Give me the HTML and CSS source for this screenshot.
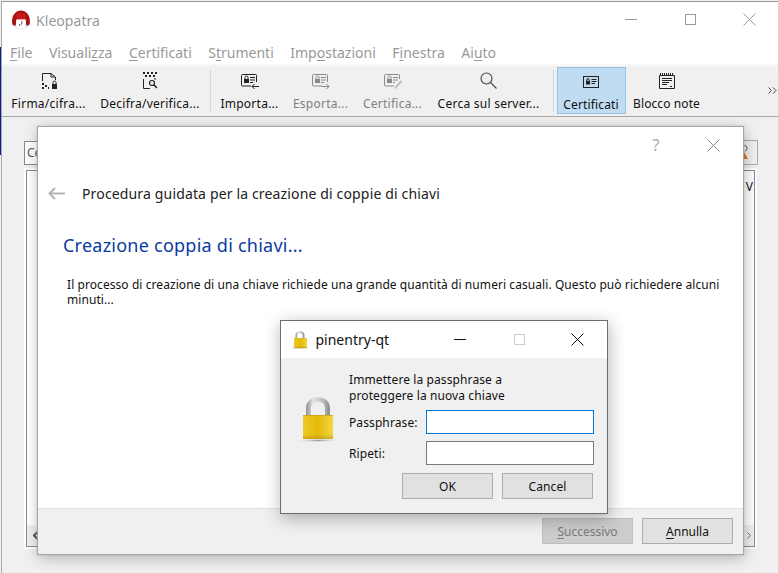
FILE: index.html
```html
<!DOCTYPE html>
<html lang="en">
	<head>
		<meta charset="utf-8" />
		<title>Kleopatra</title>
		<link rel="stylesheet" href="styles.css">
	</head>
	<body>
		<div class="desk-strip"></div>

		<div id="mainWin" class="win">
			<div class="titlebar">
				<svg class="logo" width="18" height="20" viewBox="0 0 18 20">
					<circle cx="9" cy="10.500" r="9" fill="#f4f4f4" stroke="#ddd" stroke-width="0.500"/>
					<path d="M0.300 14C-1 6 3.500 0.500 9 0.500C14.500 0.500 19 6 17.700 14C16.800 15.500 15.500 16 14.300 15.500L13.500 9.500L4.500 9.500L3.700 15.500C2.500 16 1.200 15.500 0.300 14Z" fill="#a81212"/>
					<path d="M4 4.500C6 2.500 12 2.500 14 4.500L13.500 9.500H4.500Z" fill="#c41a1a"/>
					<path d="M4.500 9.500H13.500L14 15C12.500 17.500 11 18.500 9 18.500C7 18.500 5.500 17.500 4 15Z" fill="#fff"/>
					<path d="M10 11L9.600 14.500M7.800 14L7.500 16" stroke="#333" stroke-width="0.800" fill="none"/>
				</svg>
				<span class="app-title">Kleopatra</span>
				<div class="caption-btns">
					<svg width="13" height="13" viewBox="0 0 13 13"><path d="M0 6.500H12" stroke="#999" fill="none"/></svg>
					<svg width="13" height="13" viewBox="0 0 13 13"><rect x="1.500" y="1.500" width="10" height="10" fill="none" stroke="#999"/></svg>
					<svg width="13" height="13" viewBox="0 0 13 13"><path d="M0.500 0.500L12.500 12.500M12.500 0.500L0.500 12.500" stroke="#999" fill="none"/></svg>
				</div>
			</div>
			<div class="menubar">
				<span><u>F</u>ile</span>
				<span>Visuali<u>z</u>za</span>
				<span><u>C</u>ertificati</span>
				<span>S<u>t</u>rumenti</span>
				<span>Imp<u>o</u>stazioni</span>
				<span>F<u>i</u>nestra</span>
				<span>Ai<u>u</u>to</span>
			</div>
			<div class="toolbar">
				<div class="tool t-firma">
					<svg width="16" height="17" viewBox="0 0 16 17"><path d="M1.500 9V1.500H10L14.500 5V8" fill="none" stroke="#222"/><path d="M10 1.500V5H14" fill="none" stroke="#222"/><path d="M1 11h2v2H1zM4 13h2v2H4zM1 15h2v2H1zM7 15h1v2H7z" fill="#222"/><rect x="11" y="12" width="5" height="5" fill="#222"/><path d="M12 12V10.500a1.500 1.500 0 0 1 3 0V12" fill="none" stroke="#222"/></svg>
					<span>Firma/cifra...</span>
				</div>
				<div class="tool t-decifra">
					<svg width="16" height="17" viewBox="0 0 16 17"><path d="M1 0h2v2H1zM5 0h2v2H5zM9 0h2v2H9zM13 0h2v2H13zM3 3h2v2H3zM7 3h2v2H7zM11 3h2v2H11z" fill="#222"/><path d="M1.500 7V16.500H8M13 6V8" fill="none" stroke="#222"/><circle cx="10" cy="11" r="2.500" fill="none" stroke="#222" stroke-width="1.200"/><path d="M12 13L15 16" stroke="#222" stroke-width="1.500"/></svg>
					<span>Decifra/verifica...</span>
				</div>
				<div class="sep"></div>
				<div class="tool t-importa">
					<svg width="18" height="15" viewBox="0 0 18 15"><path d="M15.500 8V1.500a1 1 0 0 0-1-1H1.500a1 1 0 0 0-1 1V11a1 1 0 0 0 1 1H10" fill="none" stroke="#222"/><rect x="3" y="5" width="5" height="4" fill="#222"/><path d="M4 5V3.500a1.500 1.500 0 0 1 3 0V5" fill="none" stroke="#222"/><path d="M9 3.500H14M9 6H14M9 8.500H12M18 12.500H11M13.500 10L11 12.500L13.500 15" fill="none" stroke="#222"/></svg>
					<span>Importa...</span>
				</div>
				<div class="tool t-esporta off">
					<svg width="18" height="15" viewBox="0 0 18 15"><path d="M15.500 8V1.500a1 1 0 0 0-1-1H1.500a1 1 0 0 0-1 1V11a1 1 0 0 0 1 1H10" fill="none" stroke="#888"/><rect x="3" y="5" width="5" height="4" fill="#888"/><path d="M4 5V3.500a1.500 1.500 0 0 1 3 0V5" fill="none" stroke="#888"/><path d="M9 3.500H14M9 6H14M9 8.500H12M10 12.500H17M14.500 10L17 12.500L14.500 15" fill="none" stroke="#888"/></svg>
					<span>Esporta...</span>
				</div>
				<div class="tool t-certifica off">
					<svg width="18" height="15" viewBox="0 0 18 15"><path d="M15.500 5V1.500a1 1 0 0 0-1-1H1.500a1 1 0 0 0-1 1V11a1 1 0 0 0 1 1H10" fill="none" stroke="#888"/><rect x="3" y="5" width="5" height="4" fill="#888"/><path d="M4 5V3.500a1.500 1.500 0 0 1 3 0V5" fill="none" stroke="#888"/><path d="M9 3.500H14M9 6H14M9 8.500H11" fill="none" stroke="#888"/><path d="M17 6L11 13L10 15L12.500 14L18 8Z" fill="#bbb"/></svg>
					<span>Certifica...</span>
				</div>
				<div class="tool t-cerca">
					<svg width="17" height="17" viewBox="0 0 17 17"><circle cx="6.500" cy="6.500" r="5.500" fill="none" stroke="#444" stroke-width="1.100"/><path d="M10.500 10.500L16.500 16.500" stroke="#444" stroke-width="1.100"/></svg>
					<span>Cerca sul server...</span>
				</div>
				<div class="sep"></div>
				<div class="tool t-cert active">
					<svg width="16" height="12" viewBox="0 0 16 12"><rect x="0.500" y="0.500" width="15" height="11" fill="none" stroke="#222"/><rect x="3" y="5" width="4" height="3.500" fill="#222"/><path d="M3.800 5V3.800a1.200 1.200 0 0 1 2.400 0V5" fill="none" stroke="#222"/><path d="M8.500 3.500H13.500M8.500 5.500H13.500M8.500 7.500H12" stroke="#222" fill="none"/></svg>
					<span>Certificati</span>
				</div>
				<div class="tool t-note">
					<svg width="16" height="16" viewBox="0 0 16 16"><path d="M0.500 2.500H15.500V15.500H0.500Z" fill="none" stroke="#222"/><path d="M1 0h1v2H1zM3 0h1v2H3zM5 0h1v2H5zM7 0h1v2H7zM9 0h1v2H9zM11 0h1v2H11zM13 0h1v2H13zM1 2h14v1H1z" fill="#222"/><path d="M3 5.500H13M3 7.500H13M3 9.500H10M3 11.500H8M11 13.500H13" stroke="#222" fill="none"/></svg>
					<span>Blocco note</span>
				</div>
				<svg class="more" width="9" height="7" viewBox="0 0 9 7"><path d="M0.500 0.500L3.500 3.500L0.500 6.500M5 0.500L8 3.500L5 6.500" fill="none" stroke="#444"/></svg>
			</div>
			<div class="central">
				<div class="searchbox">Ce</div>
				<div class="searchbtn">
					<svg width="11" height="15" viewBox="0 0 11 15"><path d="M5 0.500A3 3 0 0 1 9 3.500Q9 5 7 6.500" fill="none" stroke="#555"/><path d="M2 14L6 7L10 14Z" fill="#e0700f"/></svg>
				</div>
				<div class="certtable">
					<span class="col-v">V</span>
					<div class="hscroll">
						<svg width="7" height="11" viewBox="0 0 7 11"><path d="M6 0.500L1 5.500L6 10.500" fill="none" stroke="#555" stroke-width="2"/></svg>
						<svg width="4" height="7" viewBox="0 0 4 7"><path d="M0.500 0.500L3.500 3.500L0.500 6.500" fill="none" stroke="#777"/></svg>
					</div>
				</div>
			</div>
		</div>

		<div id="wizard" class="win">
			<div class="wiz-top">
				<span class="help">?</span>
				<svg width="13" height="13" viewBox="0 0 13 13"><path d="M0.500 0.500L12.500 12.500M12.500 0.500L0.500 12.500" stroke="#888" fill="none"/></svg>
			</div>
			<div class="wiz-head">
				<svg width="17" height="13" viewBox="0 0 17 13"><path d="M7 1L1.500 6.500L7 12M2 6.500H17" fill="none" stroke="#b4b4b4" stroke-width="2"/></svg>
				<span>Procedura guidata per la creazione di coppie di chiavi</span>
			</div>
			<div class="wiz-body">
				<h2>Creazione coppia di chiavi...</h2>
				<p>Il processo di creazione di una chiave richiede una grande quantità di numeri casuali. Questo può richiedere alcuni minuti...</p>
			</div>
			<div class="wiz-foot">
				<div class="btn disabled"><u>S</u>uccessivo</div>
				<div class="btn"><u>A</u>nnulla</div>
			</div>
		</div>

		<div id="pinentry" class="win">
			<div class="pin-title">
				<svg width="16" height="19" viewBox="0 0 16 19">
					<ellipse cx="8" cy="18" rx="8" ry="1" fill="#d8d8d8"/>
					<path d="M3.500 9V5.500C3.500 -0.500 12.500 -0.500 12.500 5.500V9H10.500V5.500C10.500 2 5.500 2 5.500 5.500V9Z" fill="url(#steel)"/>
					<rect x="2" y="8" width="13" height="10" fill="url(#gold)"/>
					<rect x="2" y="8" width="13" height="10" fill="url(#goldV)"/>
				</svg>
				<span class="pin-name">pinentry-qt</span>
				<div class="pin-caption">
					<svg width="13" height="13" viewBox="0 0 13 13"><path d="M0 6.500H12" stroke="#111" fill="none"/></svg>
					<svg width="13" height="13" viewBox="0 0 13 13"><rect x="1.500" y="1.500" width="10" height="10" fill="none" stroke="#ccc"/></svg>
					<svg width="13" height="13" viewBox="0 0 13 13"><path d="M0.500 0.500L12.500 12.500M12.500 0.500L0.500 12.500" stroke="#111" fill="none"/></svg>
				</div>
			</div>
			<div class="pin-body">
				<svg class="pin-lock" width="46" height="48" viewBox="0 0 46 48">
					<defs>
						<linearGradient id="gold" x1="0" x2="1" y1="0" y2="0">
							<stop offset="0" stop-color="#eccb24"/>
							<stop offset="0.5" stop-color="#e3ba0c"/>
							<stop offset="1" stop-color="#f2d840"/>
						</linearGradient>
						<linearGradient id="goldV" x1="0" x2="0" y1="0" y2="1">
							<stop offset="0" stop-color="#a88018" stop-opacity="0.7"/>
							<stop offset="0.08" stop-color="#e6c21a" stop-opacity="0"/>
							<stop offset="0.8" stop-color="#c09010" stop-opacity="0"/>
							<stop offset="1" stop-color="#a87c05" stop-opacity="0.5"/>
						</linearGradient>
						<linearGradient id="steel" x1="0" x2="1" y1="0" y2="0">
							<stop offset="0" stop-color="#8e8e8e"/>
							<stop offset="0.3" stop-color="#e4e4e4"/>
							<stop offset="0.7" stop-color="#bdbdbd"/>
							<stop offset="1" stop-color="#8a8a8a"/>
						</linearGradient>
						<radialGradient id="floor">
							<stop offset="0" stop-color="#999"/>
							<stop offset="1" stop-color="#eee" stop-opacity="0"/>
						</radialGradient>
					</defs>
					<ellipse cx="23" cy="45.500" rx="23" ry="2" fill="url(#floor)"/>
					<path d="M11 21V13C11 -1.500 35 -1.500 35 13V21H30V13C30 4.500 16 4.500 16 13V21Z" fill="url(#steel)"/>
					<rect x="8" y="20" width="30" height="24" fill="url(#gold)"/>
					<rect x="8" y="20" width="30" height="24" fill="url(#goldV)"/>
				</svg>
				<div class="pin-form">
					<div class="pin-desc">Immettere la passphrase a<br>proteggere la nuova chiave</div>
					<div class="pin-row">
						<label>Passphrase:</label>
						<div class="field focus"></div>
					</div>
					<div class="pin-row">
						<label>Ripeti:</label>
						<div class="field"></div>
					</div>
					<div class="pin-btns">
						<div class="btn">OK</div>
						<div class="btn">Cancel</div>
					</div>
				</div>
			</div>
		</div>
	</body>
</html>
```

FILE: styles.css
```css
body, html {
	margin:0;
	padding:0;
	width:778px;
	height:573px;
	overflow:hidden;
	background:#f0f0f0;
	font-family:"Noto Sans", "Open Sans", sans-serif;
	font-size:12px;
	color:#111;
}
u {
	text-underline-offset:2px;
}
.desk-strip {
	position:absolute;
	left:0;
	top:47px;
	width:1px;
	height:108px;
	background:#0a1a9a;
}
.win {
	position:absolute;
	box-sizing:border-box;
}

/* main window */
#mainWin {
	left:1px;
	top:1px;
	width:777px;
	height:572px;
	display:flex;
	flex-direction:column;
	border-left:1px solid #aaa;
	border-top:1px solid #999;
	background:#f0f0f0;
}
.titlebar {
	height:36px;
	background:#fff;
	display:flex;
	align-items:center;
	padding-left:10px;
	flex:none;
}
.logo {
	margin-right:6px;
}
.app-title {
	font-size:14px;
	letter-spacing:0.05px;
	color:#999;
}
.caption-btns {
	margin-left:auto;
	display:flex;
	gap:46px;
	margin-right:22px;
	margin-top:-2px;
}
.menubar {
	flex:none;
	background:#fff;
	display:flex;
	gap:16.500px;
	align-items:center;
	padding:2px 0 0 8px;
	font-size:14px;
	color:#999;
	border-bottom:2px solid #f7f7f7;
	box-sizing:border-box;
	height:28px;
}
.toolbar {
	height:51px;
	flex:none;
	display:flex;
	box-sizing:border-box;
	border-bottom:1px solid #a8a8a8;
	position:relative;
	padding-top:1px;
}
.tool {
	display:flex;
	flex-direction:column;
	align-items:center;
	box-sizing:border-box;
	height:47px;
	white-space:nowrap;
	justify-content:flex-end;
	padding-bottom:2px;
	letter-spacing:0.250px;
}
.tool svg {
	margin-bottom:6px;
}
.tool.off {
	color:#808080;
}
.t-firma { width:87px; margin-left:3px; }
.t-decifra { width:110px; margin-left:3px; }
.t-importa { width:66px; margin-left:5.500px; }
.t-esporta { width:70px; margin-left:3px; }
.t-certifica { width:74px; }
.t-cerca { width:118px; }
.t-cert { width:69px; margin-left:3px; }
.t-note { width:80px; margin-left:1px; letter-spacing:0.100px; }
.sep {
	width:1px;
	height:42px;
	background:#d6d6d6;
	margin:3px 0 0 5px;
}
.tool.active {
	background:#bfdcf3;
	border:1px solid #94c3e8;
	padding-bottom:0;
	letter-spacing:0.150px;
}
.tool.active svg {
	margin-bottom:8px;
}
.more {
	position:absolute;
	right:1px;
	top:21px;
}
.central {
	flex:1;
	position:relative;
}
.searchbox {
	position:absolute;
	left:22px;
	top:24px;
	width:722px;
	height:24px;
	box-sizing:border-box;
	border:1px solid #8a8a8a;
	background:#fff;
	padding:2px;
	color:#555;
}
.searchbtn {
	position:absolute;
	left:731px;
	top:23px;
	width:25px;
	height:25px;
	box-sizing:border-box;
	border:1px solid #aaa;
	background:#f0f0f0;
	padding:4px 0 0 4px;
}
.certtable {
	position:absolute;
	left:24px;
	top:53px;
	width:729px;
	height:377px;
	box-sizing:border-box;
	border:1px solid #8a8a9a;
	outline:2px solid #fff;
	background:#fff;
}
.col-v {
	position:absolute;
	right:1px;
	top:7px;
	color:#111;
}
.hscroll {
	position:absolute;
	left:0;
	right:0;
	bottom:0;
	height:21px;
	background:#f0f0f0;
	display:flex;
	align-items:center;
	justify-content:space-between;
	padding:0 3px 0 6px;
}

/* wizard dialog */
#wizard {
	left:38px;
	top:127px;
	width:705px;
	height:427px;
	display:flex;
	flex-direction:column;
	background:#fff;
	box-shadow:0 0 1px 1px #a6a6a6, 1px 3px 14px rgba(0,0,0,0.3);
}
.wiz-top {
	height:36px;
	flex:none;
	display:flex;
	justify-content:flex-end;
	align-items:center;
	padding-right:23px;
	gap:47.500px;
}
.help {
	font-size:16px;
	color:#aaa;
}
.wiz-head {
	display:flex;
	align-items:center;
	gap:17px;
	height:24px;
	padding-left:10px;
	font-size:14px;
	letter-spacing:0.150px;
	color:#222;
	flex:none;
	margin-top:18px;
}
.wiz-body {
	flex:1;
	padding:0 25px;
}
.wiz-body h2 {
	margin:28px 0 20px;
	font-weight:normal;
	font-size:18px;
	letter-spacing:0.240px;
	line-height:24px;
	color:#0a3ca0;
}
.wiz-body p {
	margin:0 0 0 4px;
	width:660px;
	line-height:15px;
	letter-spacing:0.070px;
	color:#111;
}
.wiz-foot {
	height:46px;
	flex:none;
	box-sizing:border-box;
	border-top:1px solid #dfdfdf;
	background:#f0f0f0;
	display:flex;
	justify-content:flex-end;
	gap:9px;
	padding:9px 10px 0 0;
}
.btn {
	width:91px;
	height:26px;
	box-sizing:border-box;
	border:1px solid #adadad;
	background:#e1e1e1;
	display:flex;
	align-items:center;
	justify-content:center;
	white-space:pre;
}
.btn.disabled {
	background:#cccccc;
	border-color:#bfbfbf;
	color:#7a7a7a;
}

/* passphrase window */
#pinentry {
	left:280px;
	top:320px;
	width:328px;
	height:194px;
	background:#f0f0f0;
	border:1px solid #6d6d6d;
	box-shadow:1px 4px 16px rgba(0,0,0,0.3);
	display:flex;
	flex-direction:column;
}
.pin-title {
	height:37px;
	flex:none;
	background:#fff;
	display:flex;
	align-items:center;
	padding-left:11px;
}
.pin-name {
	font-size:14px;
	margin-left:7.500px;
}
.pin-caption {
	margin-left:auto;
	display:flex;
	gap:45.500px;
	margin-right:23px;
}
.pin-body {
	flex:1;
	display:flex;
	padding-left:14px;
}
.pin-lock {
	margin-top:37px;
	flex:none;
}
.pin-form {
	margin-left:8px;
	width:245px;
	padding-top:14px;
	letter-spacing:0.100px;
}
.pin-desc {
	line-height:16px;
	margin-bottom:6px;
}
.pin-row {
	display:flex;
	align-items:center;
	height:24px;
	margin-bottom:7px;
}
.pin-row label {
	width:77px;
	flex:none;
}
.field {
	width:168px;
	height:24px;
	box-sizing:border-box;
	background:#fff;
	border:1px solid #7a7a7a;
}
.field.focus {
	border-color:#0078d7;
}
.pin-btns {
	display:flex;
	justify-content:flex-end;
	gap:9px;
	margin-top:8px;
	padding-right:1px;
}
```
